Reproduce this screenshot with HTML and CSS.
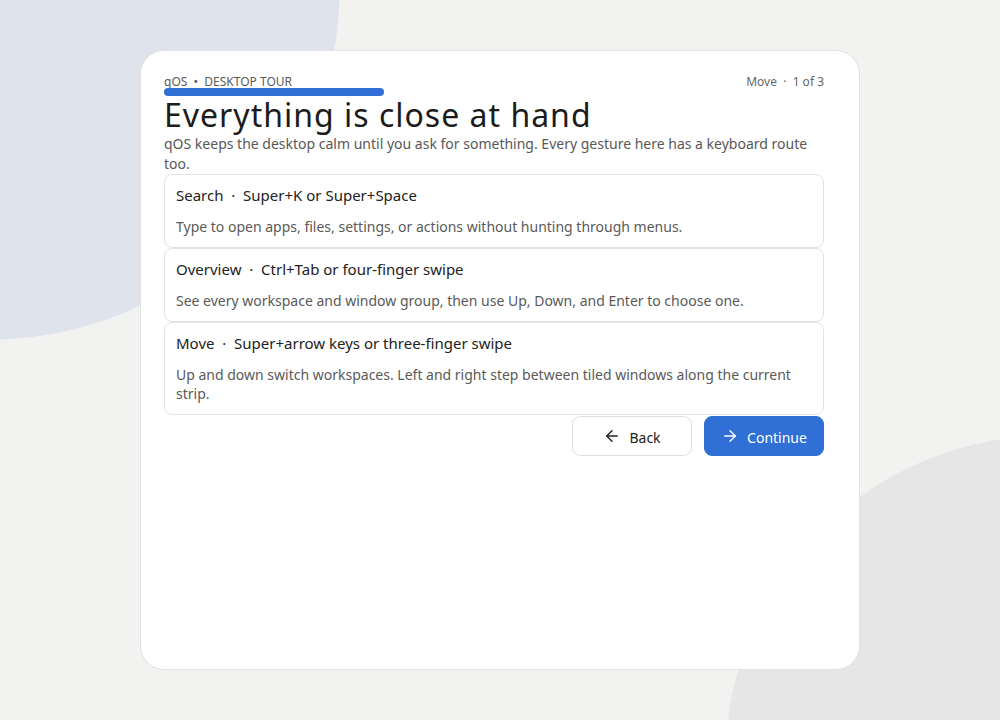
FILE: index.html
```html
<!DOCTYPE html>
<html lang="en">
<head>
<meta charset="utf-8">
<title>qOS Desktop Tour</title>
<link rel="stylesheet" href="styles.css">
</head>
<body>
<main class="stage">
  <section class="card">
    <header class="head">
      <div class="eyebrow">qOS&nbsp; •&nbsp; DESKTOP TOUR</div>
      <div class="step">Move &nbsp;·&nbsp; 1 of 3</div>
    </header>
    <div class="progress"></div>
    <h1 class="title">Everything is close at hand</h1>
    <p class="lead">qOS keeps the desktop calm until you ask for something. Every gesture here has a keyboard route too.</p>
    <ul class="items">
      <li class="item">
        <div class="item-title">Search &nbsp;·&nbsp; Super+K or Super+Space</div>
        <div class="item-desc">Type to open apps, files, settings, or actions without hunting through menus.</div>
      </li>
      <li class="item">
        <div class="item-title">Overview &nbsp;·&nbsp; Ctrl+Tab or four-finger swipe</div>
        <div class="item-desc">See every workspace and window group, then use Up, Down, and Enter to choose one.</div>
      </li>
      <li class="item">
        <div class="item-title">Move &nbsp;·&nbsp; Super+arrow keys or three-finger swipe</div>
        <div class="item-desc">Up and down switch workspaces. Left and right step between tiled windows along the current strip.</div>
      </li>
    </ul>
    <div class="actions">
      <button class="btn btn-back" type="button">
        <svg width="18" height="18" viewBox="0 0 24 24" fill="none" stroke="currentColor" stroke-width="1.9" stroke-linecap="round" stroke-linejoin="round"><path d="M19 12H5"/><path d="M12 19l-7-7 7-7"/></svg>
        <span>Back</span>
      </button>
      <button class="btn btn-next" type="button">
        <svg width="18" height="18" viewBox="0 0 24 24" fill="none" stroke="currentColor" stroke-width="1.9" stroke-linecap="round" stroke-linejoin="round"><path d="M5 12h14"/><path d="M12 5l7 7-7 7"/></svg>
        <span>Continue</span>
      </button>
    </div>
  </section>
</main>
</body>
</html>
```

FILE: styles.css
```css
* { box-sizing: border-box; }
html, body { margin: 0; padding: 0; }
body {
  width: 1000px;
  height: 720px;
  overflow: hidden;
  background:
    radial-gradient(circle 350px at -10px -10px, #dfe4ec 349px, rgba(223, 228, 236, 0) 350px),
    radial-gradient(circle 325px at 1050px 760px, #e6e6e7 324px, rgba(230, 230, 231, 0) 325px),
    #f2f2f1;
  font-family: "Noto Sans", "Open Sans", sans-serif;
  color: #1f1f1f;
}
.stage {
  padding: 50px 140px;
}
.card {
  width: 720px;
  height: 620px;
  background: #fff;
  border: 1px solid #e2e2e2;
  border-radius: 24px;
  padding: 24px 35px 24px 23px;
  display: flex;
  flex-direction: column;
}
.head {
  display: flex;
  justify-content: space-between;
  align-items: flex-start;
  font-size: 12px;
  line-height: 13px;
  height: 13px;
  color: #5a5a5a;
}
.step { color: #666; }
.progress {
  width: 220px;
  height: 8px;
  border-radius: 4px;
  background: #2f6fd6;
  flex: none;
}
.title {
  margin: 0;
  font-size: 32px;
  font-weight: 400;
  letter-spacing: 1px;
  line-height: 38px;
  color: #1c1c1c;
}
.lead {
  margin: 0;
  font-size: 14px;
  line-height: 20px;
  color: #585858;
}
.items {
  list-style: none;
  margin: 0;
  padding: 0;
  display: flex;
  flex-direction: column;
}
.item {
  border: 1px solid #e3e3e3;
  border-radius: 8px;
  padding: 10px 11px 11px;
  display: flex;
  flex-direction: column;
  gap: 12px;
}
.item-title {
  font-size: 15px;
  line-height: 20px;
  color: #222;
}
.item-desc {
  font-size: 14px;
  line-height: 19px;
  color: #5a5a5a;
}
.actions {
  display: flex;
  justify-content: flex-end;
  gap: 12px;
  margin-top: 1px;
}
.btn {
  width: 120px;
  height: 40px;
  border-radius: 8px;
  font-family: inherit;
  font-size: 14px;
  display: flex;
  align-items: center;
  justify-content: center;
  gap: 8px;
  cursor: pointer;
  padding: 0;
}
.btn span { line-height: 20px; padding-top: 3px; }
.btn svg { margin-top: -1px; }
.btn-back {
  background: #fff;
  border: 1px solid #dedede;
  color: #222;
}
.btn-next {
  background: #2f6fd6;
  border: 1px solid #2f6fd6;
  color: #fff;
}
```
